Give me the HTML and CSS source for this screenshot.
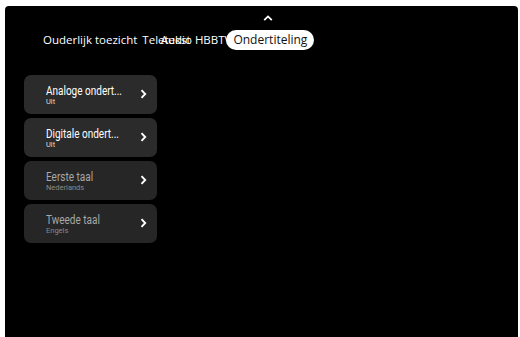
FILE: index.html
```html
<!DOCTYPE html>
<html>
<head>
<meta charset="utf-8">
<link rel="stylesheet" href="styles.css">
</head>
<body>
<div class="screen">
  <div class="up">
    <svg width="10" height="6" viewBox="0 0 10 6"><path d="M1.2 5.2 L5 1.4 L8.8 5.2" fill="none" stroke="#fff" stroke-width="1.8"/></svg>
  </div>
  <div class="tabs">
    <span class="tab t1">Ouderlijk toezicht</span>
    <span class="tab t2">Teletekst</span>
    <span class="tab t3">Audio</span>
    <span class="tab t4">HBBTV</span>
    <span class="tab active">Ondertiteling</span>
  </div>
  <div class="list">
    <div class="card">
      <div class="txt"><div class="title">Analoge ondert...</div><div class="sub">Uit</div></div>
      <svg class="chev" width="7" height="10" viewBox="0 0 7 10"><path d="M1.5 1.2 L5.2 5 L1.5 8.8" fill="none" stroke="#fff" stroke-width="1.9"/></svg>
    </div>
    <div class="card">
      <div class="txt"><div class="title">Digitale ondert...</div><div class="sub">Uit</div></div>
      <svg class="chev" width="7" height="10" viewBox="0 0 7 10"><path d="M1.5 1.2 L5.2 5 L1.5 8.8" fill="none" stroke="#fff" stroke-width="1.9"/></svg>
    </div>
    <div class="card dim">
      <div class="txt"><div class="title">Eerste taal</div><div class="sub">Nederlands</div></div>
      <svg class="chev" width="7" height="10" viewBox="0 0 7 10"><path d="M1.5 1.2 L5.2 5 L1.5 8.8" fill="none" stroke="#fff" stroke-width="1.9"/></svg>
    </div>
    <div class="card dim">
      <div class="txt"><div class="title">Tweede taal</div><div class="sub">Engels</div></div>
      <svg class="chev" width="7" height="10" viewBox="0 0 7 10"><path d="M1.5 1.2 L5.2 5 L1.5 8.8" fill="none" stroke="#fff" stroke-width="1.9"/></svg>
    </div>
  </div>
</div>
</body>
</html>
```
FILE: styles.css
```css
html, body {
  margin: 0;
  padding: 0;
  background: #fff;
}
body {
  width: 520px;
  height: 337px;
  overflow: hidden;
}
.screen {
  margin: 6px 2px 0 5px;
  width: 513px;
  height: 331px;
  background: #000;
  border-radius: 4px 4px 0 0;
  box-sizing: border-box;
  padding-top: 9px;
  font-family: "Open Sans", sans-serif;
  color: #fff;
}
.up {
  display: flex;
  justify-content: center;
  padding-left: 13px;
  height: 6px;
}
.up svg { display: block; }
.tabs {
  display: flex;
  align-items: center;
  margin-top: 9px;
  padding-left: 38px;
  height: 20px;
  font-size: 11.5px;
  white-space: nowrap;
}
.tab {
  display: block;
  line-height: 20px;
}
.t2 { margin-left: 5px; }
.t3 { margin-left: -30px; }
.t4 { margin-left: 3px; }
.active {
  margin-left: -5px;
  background: #fff;
  color: #111;
  border-radius: 10px;
  padding: 0 7px;
  font-size: 12px;
  height: 20px;
}
.list {
  margin-top: 25px;
  margin-left: 19px;
  width: 133px;
  display: flex;
  flex-direction: column;
  gap: 4.5px;
}
.card {
  height: 38.5px;
  background: #2b2b2b;
  border-radius: 7px;
  display: flex;
  align-items: center;
  justify-content: space-between;
  padding: 0 10px 0 22px;
  box-sizing: border-box;
}
.txt { display: flex; flex-direction: column; width: 90px; }
.title {
  font-family: Roboto, "Open Sans", sans-serif;
  font-size: 12.5px;
  line-height: 15px;
  color: #fff;
  white-space: nowrap;
  transform: scaleX(0.8);
  transform-origin: left center;
}
.sub {
  font-family: Roboto, "Open Sans", sans-serif;
  font-size: 7.5px;
  line-height: 8px;
  color: #ddd;
  white-space: nowrap;
}
.dim { background: #262626; }
.dim .title { color: #a8a8a8; }
.dim .sub { color: #8a8a8a; }
.chev { display: block; }
```
